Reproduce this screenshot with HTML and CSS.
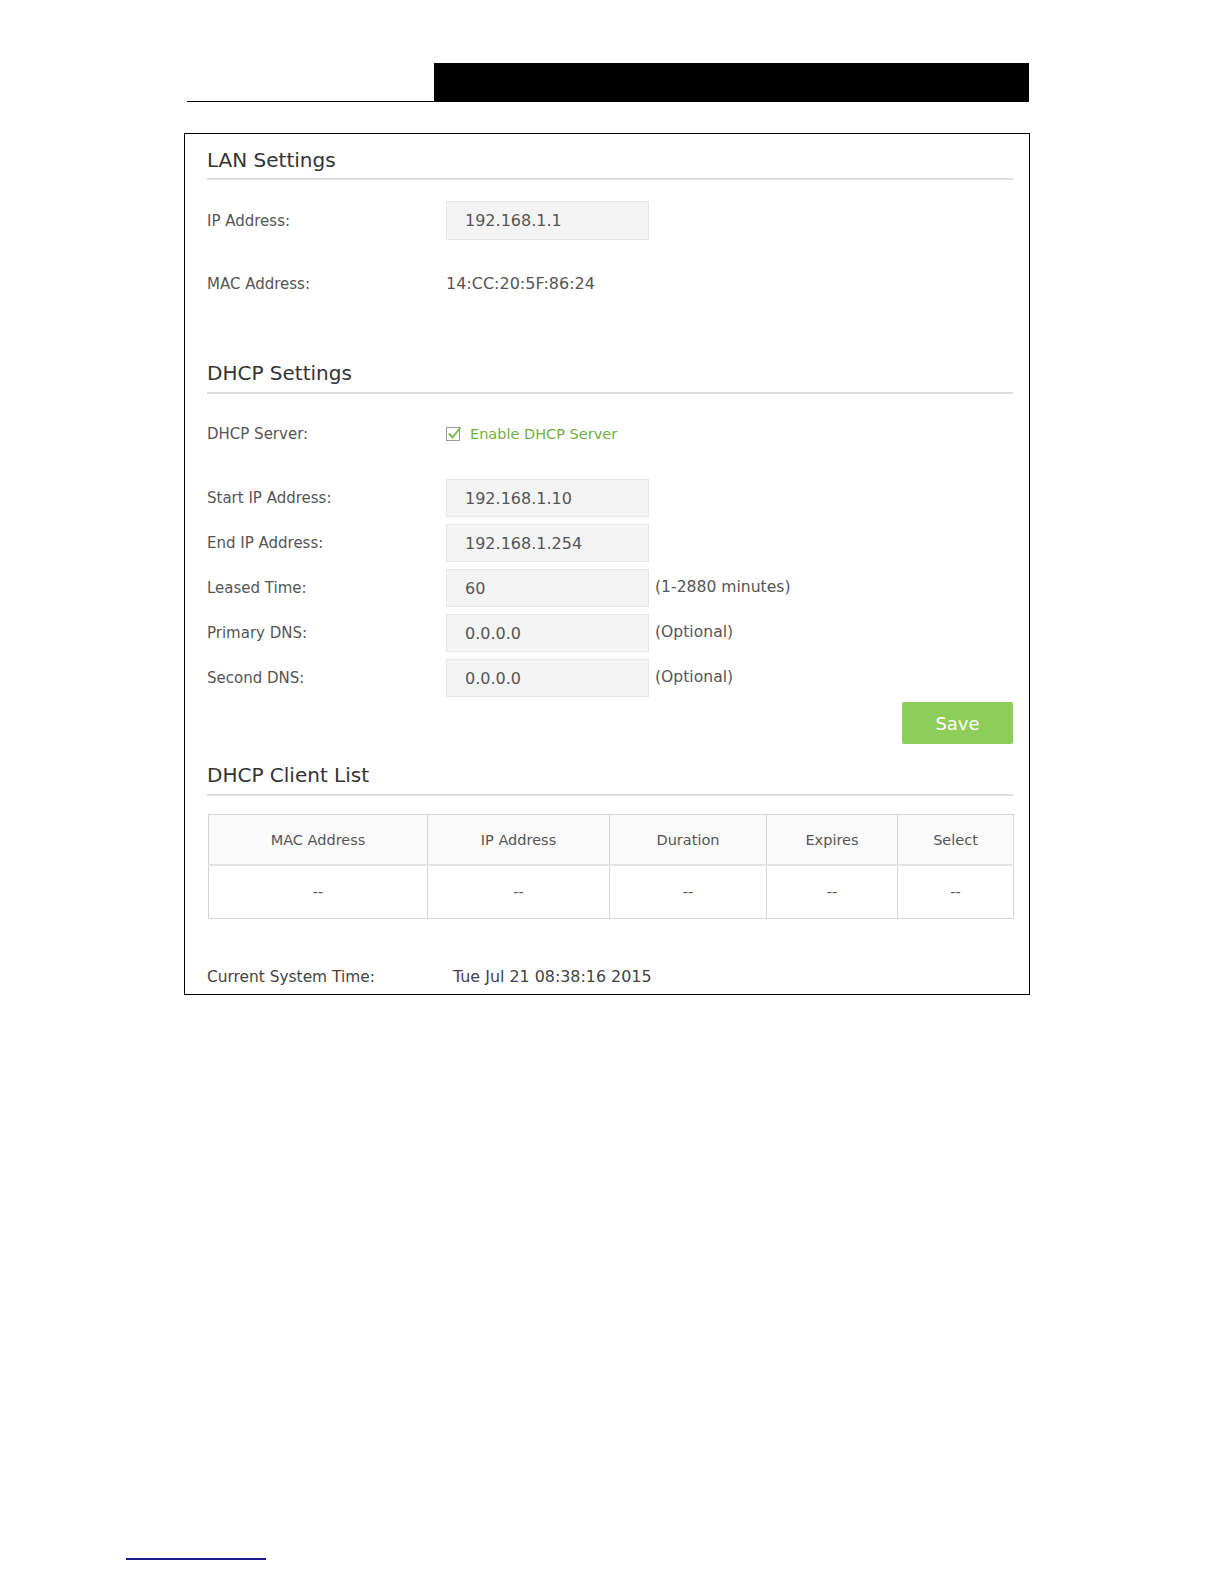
FILE: index.html
```html
<!DOCTYPE html>
<html lang="en">
<head>
	<meta charset="UTF-8">
	<title>LAN Settings</title>
	<link rel="stylesheet" href="styles.css">
</head>
<body>
	<div class="sheet">
		<div class="header">
			<span class="rule"></span>
			<span class="bar"></span>
		</div>

		<div class="panel">
			<h2 class="title">LAN Settings</h2>
			<div class="row first">
				<span class="label">IP Address:</span>
				<span class="field">192.168.1.1</span>
			</div>
			<div class="row mac">
				<span class="label">MAC Address:</span>
				<span class="value">14:CC:20:5F:86:24</span>
			</div>

			<h2 class="title dhcp">DHCP Settings</h2>
			<div class="row server">
				<span class="label">DHCP Server:</span>
				<span class="check">
					<svg width="16" height="16" viewBox="0 0 16 16">
						<rect x="0.5" y="1.5" width="13" height="13" fill="#fff" stroke="#999"/>
						<path d="M3 7.5 L6.5 11.5 L14.5 1.5" fill="none" stroke="#7cbb47" stroke-width="2"/>
					</svg>
					Enable DHCP Server
				</span>
			</div>
			<div class="row tight start">
				<span class="label">Start IP Address:</span>
				<span class="field">192.168.1.10</span>
			</div>
			<div class="row tight">
				<span class="label">End IP Address:</span>
				<span class="field">192.168.1.254</span>
			</div>
			<div class="row tight">
				<span class="label">Leased Time:</span>
				<span class="field">60</span>
				<span class="hint">(1-2880 minutes)</span>
			</div>
			<div class="row tight">
				<span class="label">Primary DNS:</span>
				<span class="field">0.0.0.0</span>
				<span class="hint">(Optional)</span>
			</div>
			<div class="row tight">
				<span class="label">Second DNS:</span>
				<span class="field">0.0.0.0</span>
				<span class="hint">(Optional)</span>
			</div>
			<div class="actions">
				<button class="save">Save</button>
			</div>

			<h2 class="title clients">DHCP Client List</h2>
			<table class="list">
				<tr>
					<th class="c1">MAC Address</th>
					<th class="c2">IP Address</th>
					<th class="c3">Duration</th>
					<th class="c4">Expires</th>
					<th class="c5">Select</th>
				</tr>
				<tr>
					<td>--</td>
					<td>--</td>
					<td>--</td>
					<td>--</td>
					<td>--</td>
				</tr>
			</table>

			<div class="time">
				<span class="time-label">Current System Time:</span>
				<span class="time-value">Tue Jul 21 08:38:16 2015</span>
			</div>
		</div>

		<div class="footer"></div>
	</div>
</body>
</html>
```

FILE: styles.css
```css
body {
	margin: 0;
	background: #fff;
	font-family: "DejaVu Sans", "Noto Sans", sans-serif;
}
h2 {
	margin: 0;
}
.sheet {
	max-width: 1224px;
}
.header {
	display: flex;
	align-items: flex-end;
	padding: 63px 0 0 187px;
}
.header .rule {
	width: 247px;
	height: 1px;
	background: #000;
}
.header .bar {
	width: 595px;
	height: 39px;
	background: #000;
}
.panel {
	margin: 31px 0 0 184px;
	width: 806px;
	border: 1px solid #000;
	padding: 0 16px 7px 22px;
	color: #555;
}
.title {
	font-weight: normal;
	font-size: 20px;
	line-height: 24px;
	color: #333;
	padding: 14px 0 6px;
	border-bottom: 2px solid #dedede;
}
.title.dhcp {
	margin-top: 44px;
	padding-top: 14px;
	padding-bottom: 7px;
}
.title.clients {
	margin-top: 5px;
	padding-bottom: 7px;
}
.row {
	display: flex;
	align-items: center;
	height: 39px;
	font-size: 15px;
}
.row.first {
	margin-top: 21px;
}
.row.mac {
	margin-top: 24px;
}
.row.server {
	margin-top: 20px;
}
.row.start {
	margin-top: 26px;
}
.row.tight {
	height: 38px;
	margin-bottom: 7px;
}
.label {
	width: 239px;
	flex: none;
}
.field {
	box-sizing: border-box;
	width: 203px;
	height: 100%;
	padding-left: 18px;
	display: flex;
	align-items: center;
	background: #f4f4f4;
	border: 1px solid #e6e6e6;
	font-size: 16px;
	color: #555;
}
.value {
	font-size: 16px;
}
.hint {
	margin-left: 6px;
	font-size: 15.6px;
	margin-top: -2px;
}
.check {
	display: flex;
	align-items: center;
	gap: 8px;
	color: #72b043;
	font-size: 14.5px;
}
.actions {
	display: flex;
	justify-content: flex-end;
	margin-top: -2px;
}
.save {
	width: 111px;
	height: 42px;
	border: none;
	border-radius: 2px;
	background: #8fcd5a;
	color: #fff;
	font-family: inherit;
	font-size: 18px;
}
.list {
	margin: 18px 0 0 1px;
	width: 806px;
	border-collapse: collapse;
	font-size: 14.5px;
	color: #555;
}
.list th,
.list td {
	border: 1px solid #d6d6d6;
	text-align: center;
	font-weight: normal;
	padding: 0;
}
.list th {
	height: 49px;
	background: #fafafa;
	border-bottom-width: 2px;
	border-bottom-color: #e4e4e4;
}
.list td {
	height: 52px;
}
.c1 { width: 218px; }
.c2 { width: 181px; }
.c3 { width: 156px; }
.c4 { width: 130px; }
.time {
	display: flex;
	margin-top: 48px;
	font-size: 15.4px;
	line-height: 20px;
	color: #444;
}
.time-label {
	width: 246px;
}
.time-value {
	font-size: 15.9px;
}
.footer {
	margin: 563px 0 0 126px;
	width: 140px;
	height: 2px;
	background: #1a1a8c;
}
```
